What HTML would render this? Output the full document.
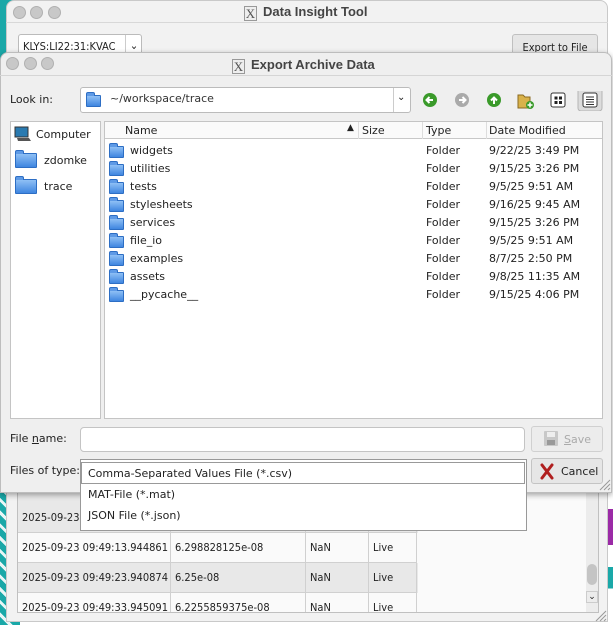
<!DOCTYPE html>
<html><head><style>
*{box-sizing:border-box;margin:0;padding:0}
body{width:613px;height:625px;overflow:hidden;position:relative;background:#1a8f8c;font-family:"DejaVu Sans","Liberation Sans",sans-serif;font-size:11px;color:#222}
.abs{position:absolute}
.dots span{position:absolute;width:13px;height:13px;border-radius:50%;background:#c8c8c8;border:1px solid #b0b0b0}
.title{font-weight:bold;font-size:13px;color:#444;font-family:"Liberation Sans",sans-serif}
.xi{display:inline-block;width:13px;height:15px;border:1px solid #999;background:#eee;font-family:"Liberation Serif",serif;font-size:13px;line-height:13px;text-align:center;color:#555;vertical-align:-2px;margin-right:6px;font-weight:normal}
.fold{position:absolute;width:15px;height:12px;background:linear-gradient(#8fc0f5,#3f86e0);border:1px solid #2d6ec4;border-radius:1px}
.fold:before{content:"";position:absolute;left:-1px;top:-4px;width:7px;height:3px;background:#5e9ae6;border:1px solid #2d6ec4;border-bottom:none;border-radius:2px 2px 0 0}
.row{position:absolute;left:0;height:18px;width:497px;font-size:11px}
.row span{position:absolute;top:2px}
.trow{position:absolute;left:0;width:400px;height:30px;font-size:11px;font-family:"DejaVu Sans Condensed","DejaVu Sans",sans-serif;white-space:nowrap}
.trow div{position:absolute;top:0;height:30px;border-right:1px solid #d0d0d0;border-bottom:1px solid #d0d0d0;padding:8px 0 0 4px;overflow:hidden}
</style></head><body>
<div class="abs" style="left:0;top:0;width:613px;height:625px;background:#fff"></div>
<div class="abs" style="left:0;top:0;width:20px;height:625px;background:#1aa8a8"></div>
<div class="abs" style="left:0;top:480px;width:16px;height:145px;background:repeating-linear-gradient(45deg,#1aa8a8 0 6px,#e8f6f6 6px 9px)"></div>
<div class="abs" style="left:604px;top:480px;width:9px;height:145px;background:linear-gradient(#fff 0 20%,#9b2aa6 20% 45%,#fff 45% 60%,#1aa8a8 60% 75%,#fff 75%)"></div>

<div class="abs" style="left:6px;top:0;width:602px;height:622px;background:#f2f2f2;border:1px solid #c9c9c9;border-radius:8px 8px 0 0"></div>
<div class="abs" style="left:6px;top:22px;width:602px;height:1px;background:#d8d8d8"></div>
<div class="dots"><span style="left:13px;top:6px"></span><span style="left:30px;top:6px"></span><span style="left:48px;top:6px"></span></div>
<div class="abs title" style="left:244px;top:4px"><span class="xi">X</span>Data Insight Tool</div>
<div class="abs" style="left:18px;top:34px;width:124px;height:24px;background:#fff;border:1px solid #bbb;border-radius:3px;padding:5px 0 0 4px;font-size:11px;font-family:'DejaVu Sans Condensed','DejaVu Sans',sans-serif">KLYS:LI22:31:KVAC<span style="position:absolute;left:106px;top:0;height:22px;border-left:1px solid #ccc;width:17px;text-align:center;padding-top:4px">⌄</span></div>
<div class="abs" style="left:512px;top:34px;width:86px;height:26px;background:#e6e6e6;border:1px solid #c0c0c0;border-radius:3px;text-align:center;padding-top:6px;font-family:'DejaVu Sans Condensed','DejaVu Sans',sans-serif">Export to File</div>

<div class="abs" style="left:17px;top:490px;width:582px;height:123px;background:#fafafa;border:1px solid #c0c0c0;overflow:hidden">
 <div class="trow" style="top:0;height:42px;background:#e8e8e8"><div style="left:0;width:153px;height:42px;padding-top:20px">2025-09-23 09:49:03.9</div><div style="left:153px;width:135px;height:42px"></div><div style="left:288px;width:63px;height:42px"></div><div style="left:351px;width:48px;height:42px"></div></div>
 <div class="trow" style="top:42px;background:#fafafa"><div style="left:0;width:153px">2025-09-23 09:49:13.944861</div><div style="left:153px;width:135px">6.298828125e-08</div><div style="left:288px;width:63px">NaN</div><div style="left:351px;width:48px">Live</div></div>
 <div class="trow" style="top:72px;background:#e8e8e8"><div style="left:0;width:153px">2025-09-23 09:49:23.940874</div><div style="left:153px;width:135px">6.25e-08</div><div style="left:288px;width:63px">NaN</div><div style="left:351px;width:48px">Live</div></div>
 <div class="trow" style="top:102px;background:#fafafa"><div style="left:0;width:153px">2025-09-23 09:49:33.945091</div><div style="left:153px;width:135px">6.2255859375e-08</div><div style="left:288px;width:63px">NaN</div><div style="left:351px;width:48px">Live</div></div>
 <div class="abs" style="left:568px;top:0;width:12px;height:121px;background:#ececec"></div>
 <div class="abs" style="left:569px;top:73px;width:10px;height:21px;background:#c4c4c4;border-radius:5px"></div>
 <div class="abs" style="left:568px;top:100px;width:12px;height:12px;font-size:9px;text-align:center;border:1px solid #ccc">⌄</div>
</div>

<div class="abs" style="left:0;top:52px;width:612px;height:441px;background:#efefef;border:1px solid #bdbdbd;border-radius:8px 8px 0 0;box-shadow:0 2px 6px rgba(0,0,0,.35)"></div>
<div class="abs" style="left:0;top:75px;width:612px;height:1px;background:#d5d5d5"></div>
<div class="dots"><span style="left:6px;top:57px"></span><span style="left:24px;top:57px"></span><span style="left:41px;top:57px"></span></div>
<div class="abs title" style="left:232px;top:57px"><span class="xi">X</span>Export Archive Data</div>

<div class="abs" style="left:10px;top:93px">Look in:</div>
<div class="abs" style="left:80px;top:87px;width:331px;height:26px;background:#fff;border:1px solid #bbb;border-radius:3px"></div>
<div class="fold" style="left:86px;top:95px"></div>
<div class="abs" style="left:110px;top:92px;color:#333">~/workspace/trace</div>
<div class="abs" style="left:393px;top:88px;width:1px;height:24px;background:#ccc"></div>
<div class="abs" style="left:397px;top:92px;font-size:10px">⌄</div>
<svg class="abs" style="left:420px;top:91px" width="190" height="20">
 <circle cx="10" cy="9" r="7" fill="#3a9a2a"/><path d="M13 9H7M9.5 6L6.5 9L9.5 12" stroke="#fff" stroke-width="2" fill="none"/>
 <circle cx="42" cy="9" r="7" fill="#aaa"/><path d="M39 9H45M42.5 6L45.5 9L42.5 12" stroke="#fff" stroke-width="2" fill="none"/>
 <circle cx="74" cy="9" r="7" fill="#3a9a2a"/><path d="M74 13V7M71 9.5L74 6.5L77 9.5" stroke="#fff" stroke-width="2" fill="none"/>
 <path d="M98 4h5l2 2h5v11h-12z" fill="#d9b24a" stroke="#8a6a20"/><circle cx="110" cy="14" r="4" fill="#3a9a2a"/><path d="M110 11.5v5M107.5 14h5" stroke="#fff" stroke-width="1.5"/>
 <rect x="131" y="2" width="14" height="14" rx="2" fill="#fff" stroke="#333"/><rect x="134.5" y="5.5" width="3" height="3" fill="#222"/><rect x="139" y="5.5" width="3" height="3" fill="#222"/><rect x="134.5" y="10" width="3" height="3" fill="#222"/><rect x="139" y="10" width="3" height="3" fill="#222"/>
 <rect x="158" y="-3" width="24" height="23" rx="3" fill="#dcdcdc" stroke="#b5b5b5"/><rect x="163" y="2" width="14" height="14" rx="2" fill="#fff" stroke="#333"/><path d="M166 6h8M166 8.5h8M166 11h8M166 13.5h8" stroke="#333"/>
</svg>

<div class="abs" style="left:10px;top:121px;width:91px;height:298px;background:#fff;border:1px solid #c4c4c4"></div>
<svg class="abs" style="left:14px;top:126px" width="18" height="16"><rect x="1" y="1" width="13" height="10" fill="#2a7ab0" stroke="#333"/><path d="M3 12h12l2 3H4z" fill="#555"/></svg>
<div class="abs" style="left:36px;top:128px">Computer</div>
<div class="fold" style="left:15px;top:153px;width:22px;height:15px"></div><div class="abs" style="left:44px;top:154px">zdomke</div>
<div class="fold" style="left:15px;top:179px;width:22px;height:15px"></div><div class="abs" style="left:44px;top:180px">trace</div>

<div class="abs" style="left:104px;top:121px;width:499px;height:298px;background:#fff;border:1px solid #c4c4c4">
 <div class="abs" style="left:0;top:0;width:497px;height:17px;border-bottom:1px solid #c8c8c8;background:#fafafa"></div>
 <div class="abs" style="left:20px;top:2px">Name</div><div class="abs" style="left:242px;top:1px;font-size:9px">▲</div>
 <div class="abs" style="left:253px;top:0;width:1px;height:17px;background:#ddd"></div>
 <div class="abs" style="left:257px;top:2px">Size</div>
 <div class="abs" style="left:317px;top:0;width:1px;height:17px;background:#ddd"></div>
 <div class="abs" style="left:321px;top:2px">Type</div>
 <div class="abs" style="left:381px;top:0;width:1px;height:17px;background:#ddd"></div>
 <div class="abs" style="left:384px;top:2px">Date Modified</div>
 <div class="abs" style="left:0;top:20px;width:497px">
  <div class="row" style="top:0"><i class="fold" style="left:4px;top:4px"></i><span style="left:25px">widgets</span><span style="left:321px">Folder</span><span style="left:384px">9/22/25 3:49 PM</span></div>
  <div class="row" style="top:18px"><i class="fold" style="left:4px;top:4px"></i><span style="left:25px">utilities</span><span style="left:321px">Folder</span><span style="left:384px">9/15/25 3:26 PM</span></div>
  <div class="row" style="top:36px"><i class="fold" style="left:4px;top:4px"></i><span style="left:25px">tests</span><span style="left:321px">Folder</span><span style="left:384px">9/5/25 9:51 AM</span></div>
  <div class="row" style="top:54px"><i class="fold" style="left:4px;top:4px"></i><span style="left:25px">stylesheets</span><span style="left:321px">Folder</span><span style="left:384px">9/16/25 9:45 AM</span></div>
  <div class="row" style="top:72px"><i class="fold" style="left:4px;top:4px"></i><span style="left:25px">services</span><span style="left:321px">Folder</span><span style="left:384px">9/15/25 3:26 PM</span></div>
  <div class="row" style="top:90px"><i class="fold" style="left:4px;top:4px"></i><span style="left:25px">file_io</span><span style="left:321px">Folder</span><span style="left:384px">9/5/25 9:51 AM</span></div>
  <div class="row" style="top:108px"><i class="fold" style="left:4px;top:4px"></i><span style="left:25px">examples</span><span style="left:321px">Folder</span><span style="left:384px">8/7/25 2:50 PM</span></div>
  <div class="row" style="top:126px"><i class="fold" style="left:4px;top:4px"></i><span style="left:25px">assets</span><span style="left:321px">Folder</span><span style="left:384px">9/8/25 11:35 AM</span></div>
  <div class="row" style="top:144px"><i class="fold" style="left:4px;top:4px"></i><span style="left:25px">__pycache__</span><span style="left:321px">Folder</span><span style="left:384px">9/15/25 4:06 PM</span></div>
 </div>
</div>

<div class="abs" style="left:10px;top:432px">File <u>n</u>ame:</div>
<div class="abs" style="left:80px;top:427px;width:445px;height:25px;background:#fff;border:1px solid #c4c4c4;border-radius:4px"></div>
<div class="abs" style="left:531px;top:426px;width:72px;height:26px;background:#ececec;border:1px solid #d0d0d0;border-radius:3px;color:#aaa;padding:6px 0 0 32px"><u>S</u>ave</div>
<svg class="abs" style="left:543px;top:430px" width="16" height="17"><rect x="1" y="1" width="14" height="15" rx="1" fill="#c8c8c8"/><rect x="4" y="2" width="8" height="5" fill="#eee"/><rect x="4" y="10" width="8" height="5" fill="#999"/></svg>

<div class="abs" style="left:10px;top:464px">Files of type:</div>
<div class="abs" style="left:80px;top:459px;width:447px;height:72px;background:#fff;border:1px solid #999"></div>
<div class="abs" style="left:81px;top:462px;width:444px;height:22px;border:1px solid #999;padding:4px 0 0 6px">Comma-Separated Values File (*.csv)</div>
<div class="abs" style="left:88px;top:488px">MAT-File (*.mat)</div>
<div class="abs" style="left:88px;top:509px">JSON File (*.json)</div>
<div class="abs" style="left:531px;top:458px;width:72px;height:26px;background:#e6e6e6;border:1px solid #c4c4c4;border-radius:3px;padding:6px 0 0 29px">Cancel</div>
<svg class="abs" style="left:539px;top:462px" width="16" height="18"><path d="M3 3l10 13M13 3L3 16" stroke="#b02020" stroke-width="3" stroke-linecap="round"/></svg>
<svg class="abs" style="left:598px;top:478px" width="13" height="13"><path d="M2 12L12 2M6 12L12 6M10 12L12 10" stroke="#999"/></svg>
<svg class="abs" style="left:594px;top:609px" width="13" height="13"><path d="M2 12L12 2M6 12L12 6M10 12L12 10" stroke="#999"/></svg>
</body></html>
